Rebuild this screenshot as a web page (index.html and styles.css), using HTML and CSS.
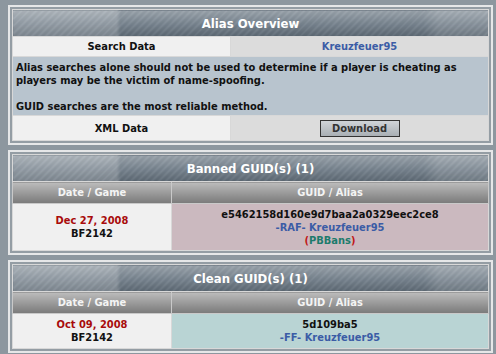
FILE: index.html
```html
<!DOCTYPE html>
<html lang="en">
<head>
  <meta charset="UTF-8" />
  <title>Alias Overview</title>
  <link rel="stylesheet" href="styles.css">
</head>
<body>

  <div class="panel">
    <table class="grid">
      <tr>
        <th class="title" colspan="2">Alias Overview</th>
      </tr>
      <tr class="row">
        <td class="label">Search Data</td>
        <td class="value"><span class="alias">Kreuzfeuer95</span></td>
      </tr>
      <tr>
        <td class="notice" colspan="2">
          Alias searches alone should not be used to determine if a player is cheating as
          players may be the victim of name-spoofing.<br /><br />
          GUID searches are the most reliable method.
        </td>
      </tr>
      <tr class="row tall">
        <td class="label">XML Data</td>
        <td class="value"><button class="btn">Download</button></td>
      </tr>
    </table>
  </div>

  <div class="panel">
    <table class="grid">
      <tr>
        <th class="title" colspan="2">Banned GUID(s) (1)</th>
      </tr>
      <tr>
        <th class="colhead date-col">Date / Game</th>
        <th class="colhead">GUID / Alias</th>
      </tr>
      <tr>
        <td class="date banned-row">
          <span class="day">Dec 27, 2008</span><br />BF2142
        </td>
        <td class="guid banned">
          e5462158d160e9d7baa2a0329eec2ce8<br />
          <span class="alias">-RAF- Kreuzfeuer95</span><br />
          <span class="paren">(</span><span class="source">PBBans</span><span class="paren">)</span>
        </td>
      </tr>
    </table>
  </div>

  <div class="panel">
    <table class="grid">
      <tr>
        <th class="title" colspan="2">Clean GUID(s) (1)</th>
      </tr>
      <tr>
        <th class="colhead date-col">Date / Game</th>
        <th class="colhead">GUID / Alias</th>
      </tr>
      <tr>
        <td class="date clean-row">
          <span class="day">Oct 09, 2008</span><br />BF2142
        </td>
        <td class="guid clean">
          5d109ba5<br />
          <span class="alias">-FF- Kreuzfeuer95</span>
        </td>
      </tr>
    </table>
  </div>

</body>
</html>
```

FILE: styles.css
```css
/* alias overview */

body {
  margin: 0;
  padding: 5px 0 0 8px;
  background-color: #8d979f;
  font-family: "DejaVu Sans Condensed", "DejaVu Sans", sans-serif;
  font-size: 11px;
  font-weight: bold;
  color: #111;
}

.panel {
  width: 477px;
  border: 2px solid #e6e7e8;
  padding: 2px;
  background-color: #949da4;
  margin-bottom: 5px;
}

.grid {
  width: 100%;
  border-collapse: collapse;
}

.grid td,
.grid th {
  border: 1px solid #d8d8d8;
  padding: 0;
}

.title {
  height: 26px;
  color: #fff;
  font-size: 13px;
  text-align: center;
  background:
    repeating-linear-gradient(135deg, rgba(255,255,255,0.05) 0 2px, rgba(0,0,0,0.03) 2px 5px),
    linear-gradient(90deg, rgba(255,255,255,0.2) 0, rgba(255,255,255,0.2) 103px, rgba(0,0,0,0) 107px, rgba(0,0,0,0) 410px, rgba(255,255,255,0.12) 425px),
    linear-gradient(180deg, #9aa3ab 0%, #7c8893 45%, #5c6873 100%);
}

.row td {
  height: 19px;
  text-align: center;
}

.row.tall td {
  height: 24px;
}

.label {
  width: 217px;
  background-color: #f0f0f0;
}

.value {
  background-color: #dcdcdc;
}

.alias {
  color: #3b5ca6;
}

.notice {
  background-color: #b8c4ce;
  padding: 4px 3px 2px !important;
  line-height: 13px;
  text-align: left;
}

.btn {
  width: 80px;
  height: 17px;
  font: inherit;
  color: #333;
  border: 1px solid #333;
  background: linear-gradient(180deg, #d0d4d8, #a9afb4);
  padding: 0;
  vertical-align: middle;
}

.colhead {
  height: 21px;
  color: #f4f4f4;
  font-weight: bold;
  background: linear-gradient(180deg, #bcbcbc 0%, #9a9a9a 50%, #7a7a7a 100%);
  border-color: #c9c9c9 !important;
}

.date-col {
  width: 158px;
}

.date {
  background-color: #f0f0f0;
  text-align: center;
  line-height: 13px;
}

.banned-row {
  height: 46px;
}

.clean-row {
  height: 34px;
}

.day {
  color: #a80b0b;
}

.guid {
  text-align: center;
  line-height: 13px;
  vertical-align: top;
  padding-top: 4px !important;
}

.banned {
  background-color: #cbb9bf;
}

.clean {
  background-color: #b9d4d4;
}

.paren {
  color: #c01818;
}

.source {
  color: #1d7b6c;
}
```
